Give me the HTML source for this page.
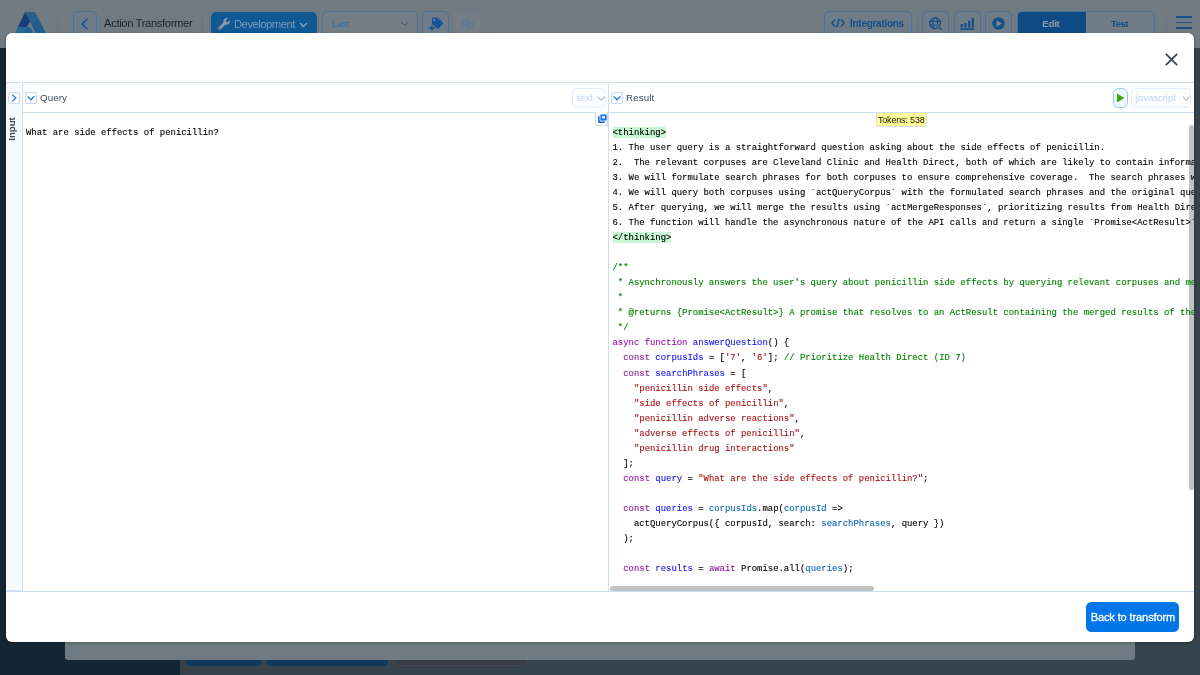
<!DOCTYPE html>
<html>
<head>
<meta charset="utf-8">
<title>Action Transformer</title>
<style>
*{box-sizing:border-box;margin:0;padding:0}
html,body{width:1200px;height:675px;overflow:hidden}
body{position:relative;will-change:transform;background:#36434c;font-family:"Liberation Sans",sans-serif;font-size:11px;color:#3c4858}
.abs{position:absolute}
/* ---------- dimmed app behind modal ---------- */
#topbar{left:0;top:0;width:1200px;height:48px;background:#727a81}
#sidebar{left:0;top:48px;width:180px;height:627px;background:#142533}
#botpanel{left:65px;top:630px;width:1070px;height:30px;background:#6f7a82;border-radius:0 0 3px 3px}
.tb-btn{border:1px solid #47729c;border-radius:5px;background:#6f7c87;top:11px;height:26px}
.tb-div{top:12px;width:1px;height:24px;background:#68737c}
.tb-txt{font-size:11.5px;white-space:nowrap;line-height:14px}
/* ---------- modal ---------- */
#modal{left:6px;top:33px;width:1188px;height:609px;background:#fff;border-radius:6px;box-shadow:0 1px 3px rgba(0,0,0,.28)}
.line-h{height:1px;background:#cfddf2}
.line-v{width:1px;background:#cfddf2}
.sq{width:12px;height:12px;border:1px solid #c5d9f0;border-radius:2px;background:#fff}
.hdr-txt{font-size:9.75px;letter-spacing:0.1px;color:#3c4a5c;line-height:12px;white-space:nowrap}
.sel{border:1px solid #e1edfb;border-radius:5px;background:#fcfdff;color:#bcd5f2;font-size:9.75px;line-height:12px;white-space:nowrap}
pre.code{font-family:"Liberation Mono",monospace;font-size:8.94px;line-height:15.03px;color:#000;white-space:pre;overflow:hidden;-webkit-text-stroke:0.12px}
.k{color:#9016a2}.i{color:#1414ee}.v{color:#0a66b8}.s{color:#a31515}.c{color:#008000}
.hl{background:#c9f7d4;padding:1.2px 0 0.1px 0}
</style>
</head>
<body>
<!-- app top bar (dimmed) -->
<div id="topbar" class="abs">
  <!-- logo -->
  <svg class="abs" style="left:14px;top:11px" width="36" height="26" viewBox="0 0 36 26">
    <defs><linearGradient id="lg1" x1="0" y1="0" x2="0" y2="1"><stop offset="0" stop-color="#2e6288"/><stop offset="1" stop-color="#145a98"/></linearGradient></defs>
    <polygon points="11.1,1 21.1,1 33.8,26 23.6,26" fill="url(#lg1)"/>
    <polygon points="11.2,1 16,10.4 13.1,16 3.8,16" fill="#143e79"/>
    <polygon points="3.8,16 15.8,16 21.6,26 -1.1,26" fill="#246c94"/>
    <polygon points="13.4,16 15.8,16 21.6,26 8.2,26" fill="#1f6193"/>
  </svg>
  <div class="abs tb-div" style="left:57px"></div>
  <!-- back -->
  <div class="abs tb-btn" style="left:72.6px;width:24px"></div>
  <svg class="abs" style="left:79px;top:17px" width="12" height="14" viewBox="0 0 12 14"><path d="M8.5 1.5 L3 7 L8.5 12.5" fill="none" stroke="#15559a" stroke-width="1.6"/></svg>
  <div class="abs tb-txt" style="left:104px;top:16.4px;color:#1b242e;font-size:11.25px;letter-spacing:-0.37px">Action Transformer</div>
  <div class="abs tb-div" style="left:202px"></div>
  <!-- development -->
  <div class="abs" style="left:211px;top:12px;width:106px;height:25px;border-radius:5px;background:#0e5995"></div>
  <svg class="abs" style="left:218px;top:18px" width="12" height="12" viewBox="0 0 512 512"><path fill="#8a98a5" d="M507.73 109.1c-2.24-9.03-13.54-12.09-20.12-5.51l-74.36 74.36-67.88-11.31-11.31-67.88 74.36-74.36c6.62-6.62 3.43-17.9-5.66-20.16-47.38-11.74-99.55.91-136.58 37.93-39.64 39.64-50.55 97.1-34.05 147.2L18.74 402.76c-24.99 24.99-24.99 65.51 0 90.5 24.99 24.99 65.51 24.99 90.5 0l213.21-213.21c50.12 16.71 107.47 5.68 147.37-34.22 37.07-37.07 49.7-89.32 37.91-136.73zM64 472c-13.25 0-24-10.75-24-24 0-13.26 10.75-24 24-24s24 10.74 24 24c0 13.25-10.75 24-24 24z"/></svg>
  <div class="abs tb-txt" style="left:234px;top:17px;color:#7a98b4;font-size:11.25px;letter-spacing:-0.5px">Development</div>
  <svg class="abs" style="left:299px;top:21.5px" width="9" height="6" viewBox="0 0 9 6"><path d="M1 1 L4.5 4.5 L8 1" fill="none" stroke="#8aa2b8" stroke-width="1.4"/></svg>
  <!-- last select -->
  <div class="abs tb-btn" style="left:321.6px;width:96px;background:#727d86"></div>
  <div class="abs tb-txt" style="left:332px;top:17.3px;color:#44729e;font-size:9.75px;letter-spacing:-0.45px;-webkit-text-stroke:0.25px #44729e">Last</div>
  <svg class="abs" style="left:400px;top:21px" width="9" height="6" viewBox="0 0 9 6"><path d="M1 1 L4.5 4.5 L8 1" fill="none" stroke="#535f6a" stroke-width="1.2"/></svg>
  <!-- tag -->
  <div class="abs tb-btn" style="left:421.6px;width:27px"></div>
  <svg class="abs" style="left:429px;top:17px" width="15" height="14" viewBox="0 0 15 14">
    <path d="M3 0.6 h5 l5.7 4.7 a1 1 0 0 1 0.1 1.4 l-4.3 4.8 a1 1 0 0 1 -1.4 0.1 l-5.1 -4.3z" fill="#12539a"/>
    <circle cx="5.2" cy="3" r="0.95" fill="#8e9aa5"/>
    <path d="M2.9 8.6 v5 M0.4 11.1 h5" stroke="#6f7c87" stroke-width="3.4"/><path d="M2.9 8.6 v5 M0.4 11.1 h5" stroke="#12539a" stroke-width="1.6"/>
  </svg>
  <!-- compare (disabled) -->
  <div class="abs tb-btn" style="left:453.6px;width:27px;border-color:#6c7d8c;background:#737e87"></div>
  <svg class="abs" style="left:461px;top:18.6px" width="14" height="10" viewBox="0 0 14 10">
    <rect x="1.5" y="1.4" width="4.6" height="4.8" fill="none" stroke="#60799a" stroke-width="1.6"/>
    <rect x="6.8" y="3.5" width="5.2" height="4.9" fill="#717c86" stroke="#60799a" stroke-width="1.6"/>
  </svg>
  <!-- integrations -->
  <div class="abs tb-btn" style="left:823.6px;width:88px"></div>
  <svg class="abs" style="left:831px;top:18.4px" width="14" height="10" viewBox="0 0 14 10"><path d="M4 1.5 L1 5 L4 8.5 M10 1.5 L13 5 L10 8.5 M8.2 0.8 L5.8 9.2" fill="none" stroke="#15508a" stroke-width="1.5"/></svg>
  <div class="abs tb-txt" style="left:850px;top:16.9px;color:#15508a;font-weight:bold;font-size:10px;letter-spacing:-0.28px">Integrations</div>
  <div class="abs tb-div" style="left:917px"></div>
  <!-- globe -->
  <div class="abs tb-btn" style="left:921.6px;width:27px"></div>
  <svg class="abs" style="left:929px;top:17px" width="14" height="14" viewBox="0 0 14 14">
    <circle cx="6.2" cy="6.2" r="5.4" fill="none" stroke="#15508a" stroke-width="1.2"/>
    <ellipse cx="6.2" cy="6.2" rx="2.4" ry="5.4" fill="none" stroke="#15508a" stroke-width="1.1"/>
    <path d="M0.8 4.4 h10.8 M0.8 8 h10.8" stroke="#15508a" stroke-width="1.1"/>
    <circle cx="9.6" cy="9.6" r="2.6" fill="#75808a"/>
    <circle cx="9.4" cy="9.4" r="1.5" fill="none" stroke="#15508a" stroke-width="1.1"/>
    <path d="M10.6 10.6 L12.8 12.8" stroke="#15508a" stroke-width="1.3"/>
  </svg>
  <!-- chart -->
  <div class="abs tb-btn" style="left:953.6px;width:27px"></div>
  <svg class="abs" style="left:960px;top:17px" width="15" height="14" viewBox="0 0 15 14">
    <rect x="0.6" y="7" width="2.3" height="3.6" fill="#15508a"/><rect x="4.3" y="6" width="2.3" height="4.6" fill="#15508a"/><rect x="8" y="3.6" width="2.3" height="7" fill="#15508a"/><rect x="11.7" y="0.8" width="2.3" height="9.8" fill="#15508a"/>
    <rect x="0.4" y="11.2" width="14" height="1.7" fill="#15508a"/>
  </svg>
  <!-- play -->
  <div class="abs tb-btn" style="left:984.6px;width:27px"></div>
  <svg class="abs" style="left:992.2px;top:17.2px" width="13" height="13" viewBox="0 0 13 13"><circle cx="6.5" cy="6.5" r="6.2" fill="#15508a"/><path d="M4.7 3.2 L9.7 6.5 L4.7 9.8z" fill="#7f8b96"/></svg>
  <!-- edit/test -->
  <div class="abs tb-btn" style="left:1016.6px;width:138px;overflow:hidden">
    <div class="abs" style="left:-1px;top:-1px;width:69px;height:25px;background:#0e4b84"></div>
  </div>
  <div class="abs tb-txt" style="left:1042.3px;top:16.8px;color:#8c9caa;font-weight:bold;font-size:9.75px;letter-spacing:-0.3px">Edit</div>
  <div class="abs tb-txt" style="left:1111px;top:16.8px;color:#15508a;font-weight:bold;font-size:9.75px;letter-spacing:-0.6px">Test</div>
  <div class="abs tb-div" style="left:1166px"></div>
  <!-- hamburger -->
  <div class="abs" style="left:1176px;top:16.3px;width:15.5px;height:1.6px;background:#13518f"></div>
  <div class="abs" style="left:1176px;top:21.9px;width:15.5px;height:1.6px;background:#13518f"></div>
  <div class="abs" style="left:1176px;top:27.3px;width:15.5px;height:1.6px;background:#13518f"></div>
</div>
<div id="sidebar" class="abs"></div>
<div class="abs" style="left:186px;top:650px;width:75px;height:16px;border-radius:4px;background:#10395c"></div>
<div class="abs" style="left:266.5px;top:650px;width:121px;height:16px;border-radius:4px;background:#10395c"></div>
<div class="abs" style="left:392.5px;top:650px;width:135.5px;height:16px;border-radius:4px;background:#383f49;border:1px solid #43464f"></div>
<div id="botpanel" class="abs"></div>

<!-- modal -->
<div id="modal" class="abs">
  <!-- close X (coords relative to modal: modal origin 6,33) -->
  <svg class="abs" style="left:1159px;top:20px" width="13" height="13" viewBox="0 0 13 13"><path d="M0.8 0.8 L12.2 12.2 M12.2 0.8 L0.8 12.2" stroke="#3c4858" stroke-width="1.8" fill="none"/></svg>

  <!-- left "Input" strip -->
  <div class="abs" style="left:0;top:49px;width:15px;height:509px;background:#f6f9fe;border-top:1px solid #d3e1f3;border-bottom:1px solid #d3e1f3"></div>
  <div class="abs sq" style="left:2px;top:59px"></div>
  <svg class="abs" style="left:2px;top:59px" width="12" height="12" viewBox="0 0 12 12"><path d="M4.2 2.6 L7.8 6 L4.2 9.4" fill="none" stroke="#1a73e8" stroke-width="1.3"/></svg>
  <div class="abs" style="left:-8.8px;top:89.5px;width:30px;height:12px;transform:rotate(-90deg);font-weight:bold;font-size:9.75px;letter-spacing:-0.1px;line-height:12px;text-align:center;color:#3c4a5c">Input</div>

  <!-- left pane -->
  <div class="abs" style="left:16px;top:49px;width:587px;height:510px;border:1px solid #d3e1f3;border-right:none;border-radius:3px 0 0 0;background:#fff"></div>
  <div class="abs line-h" style="left:17px;top:79px;width:1171px"></div>
  <div class="abs sq" style="left:19px;top:59px"></div>
  <svg class="abs" style="left:19px;top:59px" width="12" height="12" viewBox="0 0 12 12"><path d="M2.6 4.4 L6 7.8 L9.4 4.4" fill="none" stroke="#1a73e8" stroke-width="1.3"/></svg>
  <div class="abs hdr-txt" style="left:34px;top:59px">Query</div>
  <div class="abs sel" style="left:566px;top:55px;width:34px;height:20px;padding:2.8px 0 0 4px">text</div>
  <svg class="abs" style="left:591px;top:63.2px" width="8.4" height="5.2" viewBox="0 0 8.4 5.2"><path d="M0.8 0.8 L4.2 4.2 L7.6 0.8" fill="none" stroke="#c2c5ca" stroke-width="1.3"/></svg>

  <!-- splitter + right pane -->
  <div class="abs line-v" style="left:602px;top:49px;height:510px"></div>
  <div class="abs line-h" style="left:602px;top:49px;width:586px"></div>
  <div class="abs line-h" style="left:0px;top:558px;width:1188px"></div>
  <div class="abs sq" style="left:605px;top:59px"></div>
  <svg class="abs" style="left:605px;top:59px" width="12" height="12" viewBox="0 0 12 12"><path d="M2.6 4.4 L6 7.8 L9.4 4.4" fill="none" stroke="#1a73e8" stroke-width="1.3"/></svg>
  <div class="abs hdr-txt" style="left:620px;top:59px">Result</div>
  <!-- run button -->
  <div class="abs" style="left:1107px;top:55px;width:15px;height:20px;border:1px solid #93c3f4;border-radius:5.5px;background:#f1f7ff"></div>
  <svg class="abs" style="left:1110px;top:60px" width="9" height="10" viewBox="0 0 9 10"><path d="M1 0.6 L8.4 5 L1 9.4z" fill="#3fa30f"/></svg>
  <div class="abs sel" style="left:1125px;top:55px;width:60px;height:20px;padding:2.8px 0 0 3.8px;letter-spacing:-0.12px">javascript</div>
  <svg class="abs" style="left:1176px;top:63.2px" width="8.4" height="5.2" viewBox="0 0 8.4 5.2"><path d="M0.8 0.8 L4.2 4.2 L7.6 0.8" fill="none" stroke="#c2c5ca" stroke-width="1.3"/></svg>

  <!-- copy icon -->
  <div class="abs" style="left:589px;top:79px;width:13px;height:14px;border:1px solid #c5d9f0;border-top:none;border-radius:0 0 0 3px;background:#fff"></div>
  <svg class="abs" style="left:592px;top:81px" width="9" height="9" viewBox="0 0 9 9"><rect x="0" y="2" width="7" height="7" rx="1" fill="#1a73e8"/><rect x="2" y="0" width="7" height="7" rx="1" fill="#1a73e8" stroke="#fff" stroke-width="0.8"/><rect x="4" y="2.2" width="3" height="2.2" fill="#fff"/></svg>

  <!-- tokens badge -->
  <div class="abs" style="left:870px;top:79.5px;width:51px;height:14.2px;background:#fffb99;border:1px solid #d6e0ea;border-top:none;border-radius:0 0 3px 3px;font-size:9px;letter-spacing:-0.17px;line-height:13px;padding:1.6px 0 0 0.9px;color:#1f1c08;white-space:nowrap">Tokens: 538</div>

  <!-- scrollbars -->
  <div class="abs" style="left:1183px;top:91.5px;width:4.7px;height:365.5px;background:#c1c1c1;border-radius:2.5px"></div>
  <div class="abs" style="left:603.5px;top:553.3px;width:264.5px;height:4.4px;background:#c1c1c1;border-radius:2.5px"></div>

  <!-- editors -->
  <pre class="abs code" id="leftcode" style="left:20px;top:93px;width:560px">What are side effects of penicillin?</pre>
  <pre class="abs code" id="rightcode" style="left:606.5px;top:93px;width:581px;height:460px"><span class="hl">&lt;thinking&gt;</span>
1. The user query is a straightforward question asking about the side effects of penicillin.
2.  The relevant corpuses are Cleveland Clinic and Health Direct, both of which are likely to contain information about penicillin side effects.
3. We will formulate search phrases for both corpuses to ensure comprehensive coverage.  The search phrases will be variations of the query.
4. We will query both corpuses using `actQueryCorpus` with the formulated search phrases and the original query for context.
5. After querying, we will merge the results using `actMergeResponses`, prioritizing results from Health Direct as it is more general.
6. The function will handle the asynchronous nature of the API calls and return a single `Promise&lt;ActResult&gt;`.
<span class="hl">&lt;/thinking&gt;</span>

<span class="c">/**</span>
<span class="c"> * Asynchronously answers the user's query about penicillin side effects by querying relevant corpuses and merging the results.</span>
<span class="c"> *</span>
<span class="c"> * @returns {Promise&lt;ActResult&gt;} A promise that resolves to an ActResult containing the merged results of the queries.</span>
<span class="c"> */</span>
<span class="k">async</span> <span class="k">function</span> <span class="i">answerQuestion</span>() {
  <span class="k">const</span> <span class="i">corpusIds</span> = [<span class="s">'7'</span>, <span class="s">'6'</span>]; <span class="c">// Prioritize Health Direct (ID 7)</span>
  <span class="k">const</span> <span class="i">searchPhrases</span> = [
    <span class="s">"penicillin side effects"</span>,
    <span class="s">"side effects of penicillin"</span>,
    <span class="s">"penicillin adverse reactions"</span>,
    <span class="s">"adverse effects of penicillin"</span>,
    <span class="s">"penicillin drug interactions"</span>
  ];
  <span class="k">const</span> <span class="i">query</span> = <span class="s">"What are the side effects of penicillin?"</span>;

  <span class="k">const</span> <span class="i">queries</span> = <span class="v">corpusIds</span>.map(<span class="v">corpusId</span> =&gt;
    actQueryCorpus({ corpusId, search: <span class="v">searchPhrases</span>, query })
  );

  <span class="k">const</span> <span class="i">results</span> = <span class="k">await</span> Promise.all(<span class="v">queries</span>);</pre>

  <!-- footer button -->
  <div class="abs" style="left:1080.3px;top:568.6px;width:93.2px;height:30.1px;border-radius:5.5px;background:#0076e8;color:#fff;font-size:11px;letter-spacing:-0.1px;-webkit-text-stroke:0.3px #fff;line-height:30px;text-align:center;white-space:nowrap">Back to transform</div>
</div>
</body>
</html>
